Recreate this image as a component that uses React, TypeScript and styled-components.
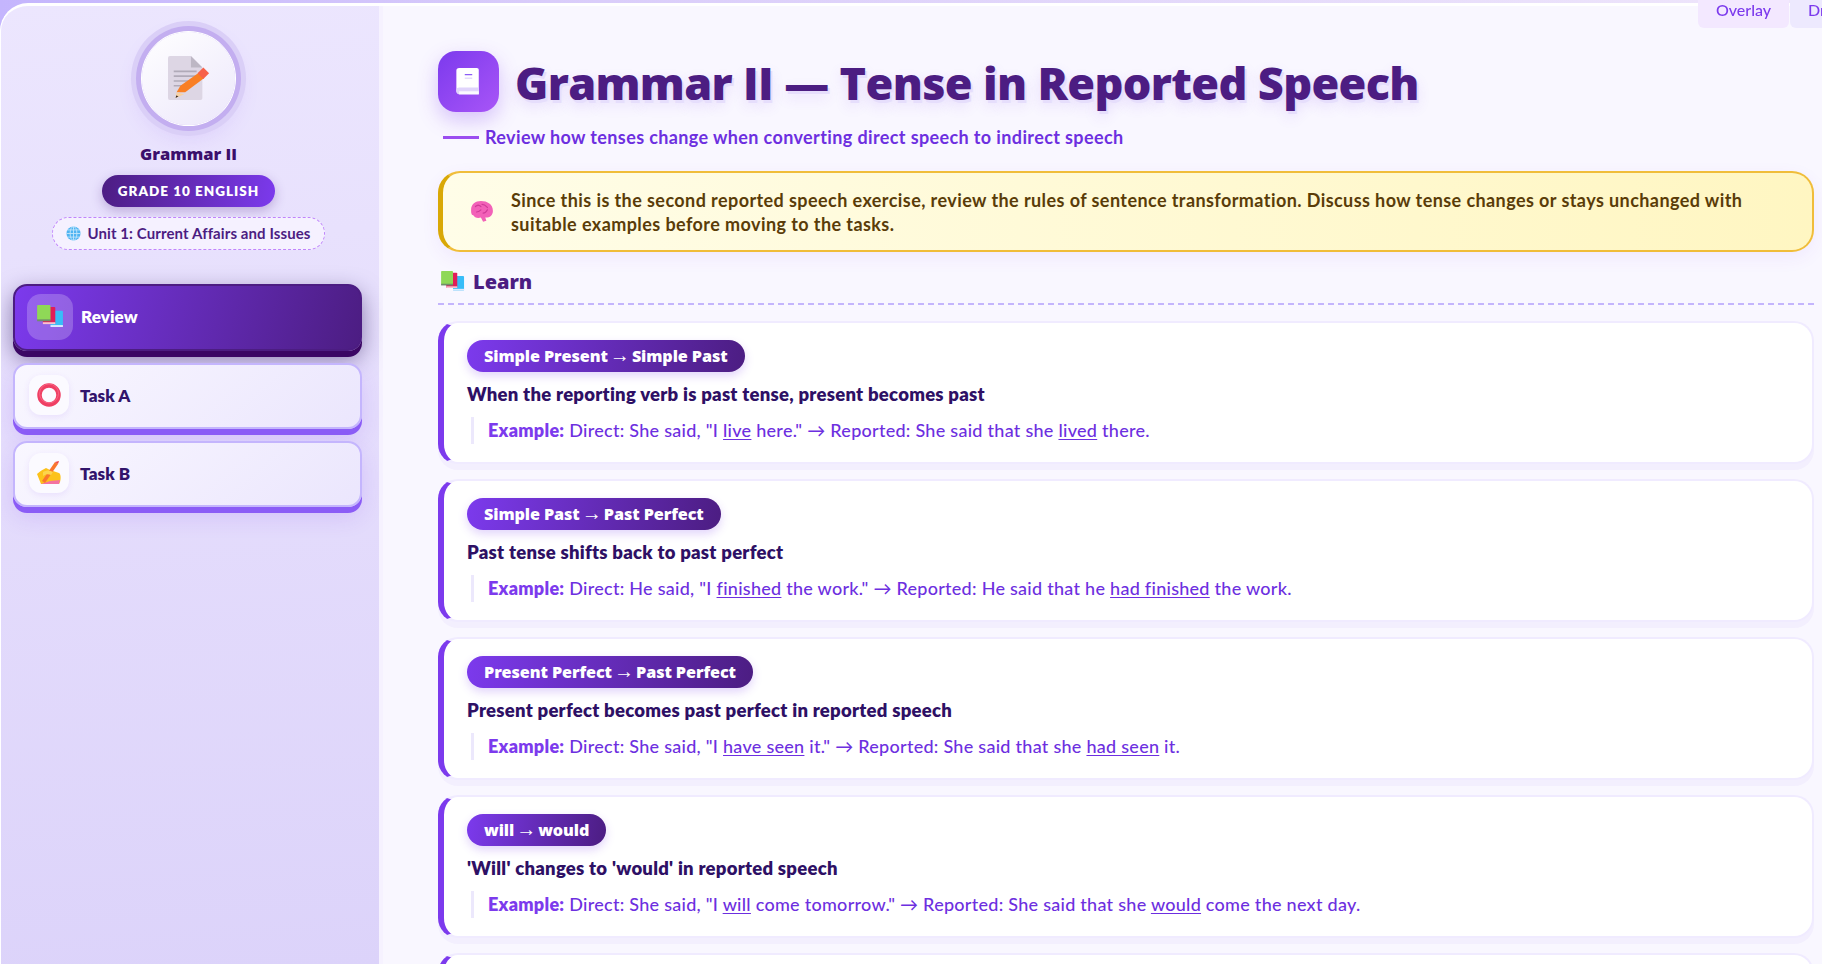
import React from "react";
import styled, { createGlobalStyle } from "styled-components";

const Global = createGlobalStyle`
  html, body { margin: 0; padding: 0; height: 100%; overflow: hidden; }
  body { background: linear-gradient(90deg, #c4b5fd 0%, #d9ccfa 30%, #efe6fb 100%); font-family: "Lato", "Noto Sans", sans-serif; }
  #root { height: 100vh; }
`;
const BODY = `"Lato", "Noto Sans", sans-serif`;
const HEAD = `"Open Sans", "Noto Sans", sans-serif`;

const Shell = styled.div`
  height: calc(100vh - 3px);
  margin-top: 3px;
  display: flex;
  border-top: 3px solid #fff;
  border-left: 1px solid #fff;
  border-radius: 28px 0 0 0;
  overflow: hidden;
  background: #f9f7ff;
`;
const Sidebar = styled.aside`
  flex: 0 0 382px;
  box-sizing: border-box;
  border-right: 4px solid #f6f2ff;
  padding: 25px 15px 0 12px;
  background: linear-gradient(176deg, #ece6fe 0%, #e4dcfc 50%, #dcd3fa 100%);
  display: flex;
  flex-direction: column;
`;
const Avatar = styled.div`
  width: 93px;
  height: 93px;
  align-self: center;
  margin-top: 1px;
  border-radius: 50%;
  background: linear-gradient(145deg, #ffffff, #ece7fb);
  box-shadow: 0 0 0 1px #fff, 0 0 0 6px #c3aef0, 0 0 0 11px #dacff7, 0 8px 24px rgba(124, 58, 237, 0.18);
  display: flex;
  align-items: center;
  justify-content: center;
`;
const SideTitle = styled.div`
  margin-top: 17px;
  text-align: center;
  font: 800 16.5px/24px ${HEAD};
  color: #3b0f6b;
`;
const GradeBadge = styled.div`
  align-self: center;
  margin-top: 9px;
  width: 173px;
  height: 32px;
  border-radius: 16px;
  background: linear-gradient(100deg, #4c1d82, #7c3aed);
  box-shadow: 0 4px 12px rgba(76, 29, 130, 0.28);
  color: #fff;
  font: 800 13.5px/32px ${BODY};
  letter-spacing: 1px;
  text-align: center;
`;
const UnitPill = styled.div`
  align-self: center;
  margin-top: 10px;
  width: 273px;
  height: 33px;
  box-sizing: border-box;
  border: 1px dashed #c084fc;
  border-radius: 17px;
  background: #f5f1ff;
  display: flex;
  align-items: center;
  justify-content: center;
  gap: 6px;
  font: 700 15px/1 ${BODY};
  letter-spacing: 0.1px;
  color: #4c1d82;
`;
const Nav = styled.nav`
  margin-top: 34px;
  display: flex;
  flex-direction: column;
  gap: 6px;
`;
const NavItem = styled.div<{ $active?: boolean }>`
  height: ${(p) => (p.$active ? "67px" : "66px")};
  width: 349px;
  box-sizing: border-box;
  border-radius: 14px;
  display: flex;
  align-items: center;
  gap: ${(p) => (p.$active ? "8px" : "11px")};
  padding: 0 0 2px ${(p) => (p.$active ? "12px" : "14px")};
  font: 800 17px/1 ${BODY};
  letter-spacing: 0.1px;
  margin-bottom: 6px;
  color: ${(p) => (p.$active ? "#fff" : "#32146b")};
  border: 2px solid ${(p) => (p.$active ? "#4c1d82" : "#c4b5fd")};
  background: ${(p) =>
    p.$active
      ? "linear-gradient(105deg, #7c3aed 0%, #4c1d82 100%)"
      : "linear-gradient(140deg, #f9f7ff 0%, #ebe6fd 100%)"};
  box-shadow: ${(p) =>
    p.$active
      ? "0 6px 0 #3b0764, 0 8px 22px rgba(40, 20, 90, 0.5)"
      : "0 6px 0 #8b5cf6, 0 10px 22px rgba(124, 58, 237, 0.16)"};
`;
const NavIcon = styled.div<{ $active?: boolean }>`
  width: ${(p) => (p.$active ? "46px" : "40px")};
  height: ${(p) => (p.$active ? "46px" : "40px")};
  border-radius: ${(p) => (p.$active ? "14px" : "12px")};
  background: ${(p) => (p.$active ? "rgba(255,255,255,.22)" : "#fbfaff")};
  box-shadow: ${(p) => (p.$active ? "none" : "0 2px 6px rgba(124,58,237,.1)")};
  display: flex;
  align-items: center;
  justify-content: center;
`;
const Main = styled.main`
  flex: 1;
  min-width: 0;
  box-sizing: border-box;
  padding: 45px 8px 0 55px;
  background: #f9f7ff;
  overflow: hidden;
`;
const TitleRow = styled.div`
  display: flex;
  align-items: center;
  gap: 16px;
`;
const TitleIcon = styled.div`
  width: 61px;
  height: 61px;
  border-radius: 18px;
  background: linear-gradient(135deg, #7c3aed, #a855f7);
  box-shadow: 0 8px 20px rgba(124, 58, 237, 0.28);
  display: flex;
  align-items: center;
  justify-content: center;
`;
const Title = styled.h1`
  margin: 1px 0 -1px;
  font: 800 45px/61px ${HEAD};
  letter-spacing: -0.65px;
  color: #4c1d82;
  text-shadow: 2px 3px 0 #e6defc, 0 6px 14px rgba(124, 58, 237, 0.15);
`;
const Subtitle = styled.div`
  margin-top: 13px;
  padding-left: 5px;
  display: flex;
  align-items: center;
  gap: 6px;
  font: 700 18px/24px ${BODY};
  letter-spacing: 0.38px;
  color: #6d2fe0;
`;
const Dash = styled.span`
  width: 36px;
  height: 3px;
  background: #9b4df0;
`;
const Alert = styled.div`
  margin-top: 22px;
  height: 81px;
  box-sizing: border-box;
  border: 2px solid #f0bd3a;
  border-left: 5px solid #d9a806;
  border-radius: 22px;
  background: linear-gradient(90deg, #fffde8, #fff6c2);
  box-shadow: 0 6px 18px rgba(124, 58, 237, 0.07);
  display: flex;
  align-items: center;
  gap: 16px;
  padding: 0 40px 0 26px;
  font: 700 18px/24px ${BODY};
  letter-spacing: 0.42px;
  color: #5a3c08;
  svg { flex: none; }
`;
const SectionHead = styled.div`
  margin-top: 14px;
  height: 39px;
  box-sizing: border-box;
  padding: 0 0 6px 3px;
  display: flex;
  align-items: center;
  gap: 8px;
  font: 800 20px/28px ${HEAD};
  color: #4c1d82;
  border-bottom: 2px dashed #c4b5fd;
`;
const CardList = styled.div`
  margin-top: 16px;
  display: flex;
  flex-direction: column;
  gap: 15px;
`;
const Card = styled.article`
  height: 143px;
  box-sizing: border-box;
  border: 2px solid #f0ebff;
  border-left: 6px solid #7c3aed;
  border-radius: 20px;
  background: #fff;
  box-shadow: 0 6px 0 #f3effe;
  padding: 17px 22px 0 23px;
`;
const Pill = styled.span`
  display: inline-block;
  height: 32px;
  padding: 0 17px;
  border-radius: 16px;
  background: linear-gradient(100deg, #7c3aed, #4c1d82);
  box-shadow: 0 4px 10px rgba(124, 58, 237, 0.22);
  color: #fff;
  font: 800 16.2px/31px ${HEAD};
  letter-spacing: -0.1px;
`;
const PillArrow = styled.span`
  font: 400 20px/31px "Liberation Sans", sans-serif;
  margin: 0 -2px;
`;
const Rule = styled.div`
  margin-top: 8px;
  font: 800 18.5px/28px ${BODY};
  letter-spacing: 0.25px;
  color: #2e1065;
`;
const Example = styled.div`
  margin-top: 9px;
  margin-left: 4px;
  height: 27px;
  border-left: 3px solid #ece8fc;
  padding-left: 14px;
  font: 500 18px/27px ${BODY};
  letter-spacing: 0.27px;
  color: #6d2fe0;
  b { font-weight: 800; color: #7c3aed; }
  u { text-underline-offset: 2px; }
`;
const TabBar = styled.div`
  position: fixed;
  top: 0;
  left: 1698px;
  display: flex;
  gap: 1px;
`;
const Tab = styled.div<{ $alt?: boolean }>`
  height: 28px;
  width: ${(p) => (p.$alt ? "60px" : "91px")};
  box-sizing: border-box;
  padding-left: ${(p) => (p.$alt ? "18px" : "0")};
  border-radius: 0 0 6px 6px;
  background: ${(p) => (p.$alt ? "#ede9fe" : "#f3e8ff")};
  color: #7c3aed;
  text-align: ${(p) => (p.$alt ? "left" : "center")};
  font: 500 16px/20px ${BODY};
`;

const Memo = () => (
  <svg width="42" height="46" viewBox="0 0 44 48">
    <path d="M2 0h22l12 12v32a2 2 0 0 1-2 2H2a2 2 0 0 1-2-2V2a2 2 0 0 1 2-2z" fill="#ddd6e4" />
    <path d="M24 0l12 12H24z" fill="#bdb7c4" />
    <g stroke="#b0aab8" strokeWidth="1.6">
      <path d="M6 16h24M6 21h24M6 26h20M6 31h14" />
    </g>
    <path d="M9 38l4-7 20-14 5 6-20 15z" fill="#f97f24" />
    <path d="M31 18l6-6 6 6-6 6z" fill="#f7614a" />
    <path d="M8 44l1-6 8 2z" fill="#f6d2a6" />
    <path d="M8 44l.6-2.6 2.4.8z" fill="#3a2a20" />
  </svg>
);
const Books = ({ size = 27 }: { size?: number }) => (
  <svg width={size} height={size * 0.85} viewBox="0 0 28 24">
    <rect x="14" y="6" width="13" height="17" rx="1" fill="#38bdf8" />
    <rect x="14" y="21" width="13" height="2" fill="#dbeafe" />
    <rect x="6" y="2" width="13" height="18" rx="1" fill="#e11d58" />
    <rect x="6" y="18" width="13" height="2" fill="#f9c2d0" />
    <rect x="0" y="0" width="14" height="16" rx="1" fill="#8fd857" />
    <rect x="0" y="15" width="14" height="2" fill="#6f8f6a" />
  </svg>
);
const Ring = () => (
  <svg width="24" height="24" viewBox="0 0 24 24">
    <circle cx="12" cy="12" r="9.5" fill="none" stroke="#ef3f63" strokeWidth="4.5" />
    <circle cx="12" cy="10.5" r="9.5" fill="none" stroke="#fb7190" strokeWidth="1" opacity=".7" />
  </svg>
);
const Hand = () => (
  <svg width="26" height="26" viewBox="0 0 26 26">
    <path d="M1 14c3-3 7-5 9-6l4 2 9 3c2 1 2 6 1 9l-1 2H5z" fill="#fcc21b" />
    <path d="M5 24h18l1-4-10 1z" fill="#f472a0" />
    <path d="M6 21L19 2l3 2L9 23z" fill="#f9762c" />
    <path d="M19 2l3 2 1-3z" fill="#ef4444" />
    <path d="M7 12c4-2 7-2 10 0l-2 3c-3-1-5-1-8 1z" fill="#fdd44c" />
  </svg>
);
const Globe = () => (
  <svg width="15" height="15" viewBox="0 0 16 16">
    <circle cx="8" cy="8" r="7.5" fill="#4fb4f2" />
    <g fill="none" stroke="#c9e8fb" strokeWidth=".9">
      <ellipse cx="8" cy="8" rx="3.6" ry="7.5" />
      <path d="M8 .5v15M.5 8h15M1.5 4.2h13M1.5 11.8h13" />
    </g>
  </svg>
);
const Brain = () => (
  <svg width="26" height="24" viewBox="1 1 22 22">
    <path d="M2 10c0-5 4-8 9-8 6 0 11 3 11 9 0 4-3 6-6 6h-1l1 3-3 1-2-4c-3 1-6 0-7-2-2 0-2-3-2-5z" fill="#f261b8" />
    <path d="M6 7c2-2 4-1 5 0M12 5c3 0 4 2 5 3M7 12c2 0 3-1 4-2M13 13c2 0 3-1 4-3" fill="none" stroke="#d03b98" strokeWidth="1.1" strokeLinecap="round" />
  </svg>
);
const BookWhite = () => (
  <svg width="25" height="28" viewBox="0 0 26 30">
    <path d="M3 0h19a2 2 0 0 1 2 2v26H5a4 4 0 0 1-5-3V3a3 3 0 0 1 3-3z" fill="#fff" />
    <path d="M0 23.5a3 3 0 0 1 3-2.5h21v7H3a3 3 0 0 1-3-3z" fill="#e0d4fb" />
    <path d="M3 25h21v3H3z" fill="#fff" opacity=".85" />
    <path d="M9 7h8" stroke="#8b5cf6" strokeWidth="1.4" />
    <path d="M9 11h8" stroke="#e5dcfb" strokeWidth="1.4" />
  </svg>
);

const rules = [
  {
    from: "Simple Present", to: "Simple Past",
    rule: "When the reporting verb is past tense, present becomes past",
    ex: <>Direct: She said, "I <u>live</u> here." → Reported: She said that she <u>lived</u> there.</>,
  },
  {
    from: "Simple Past", to: "Past Perfect",
    rule: "Past tense shifts back to past perfect",
    ex: <>Direct: He said, "I <u>finished</u> the work." → Reported: He said that he <u>had finished</u> the work.</>,
  },
  {
    from: "Present Perfect", to: "Past Perfect",
    rule: "Present perfect becomes past perfect in reported speech",
    ex: <>Direct: She said, "I <u>have seen</u> it." → Reported: She said that she <u>had seen</u> it.</>,
  },
  {
    from: "will", to: "would",
    rule: "'Will' changes to 'would' in reported speech",
    ex: <>Direct: She said, "I <u>will</u> come tomorrow." → Reported: She said that she <u>would</u> come the next day.</>,
  },
];

export default function App() {
  return (
    <>
      <Global />
      <Shell>
        <Sidebar>
          <Avatar><Memo /></Avatar>
          <SideTitle>Grammar II</SideTitle>
          <GradeBadge>GRADE 10 ENGLISH</GradeBadge>
          <UnitPill><Globe />Unit 1: Current Affairs and Issues</UnitPill>
          <Nav>
            <NavItem $active><NavIcon $active><Books /></NavIcon>Review</NavItem>
            <NavItem><NavIcon><Ring /></NavIcon>Task A</NavItem>
            <NavItem><NavIcon><Hand /></NavIcon>Task B</NavItem>
          </Nav>
        </Sidebar>
        <Main>
          <TitleRow>
            <TitleIcon><BookWhite /></TitleIcon>
            <Title>Grammar II — Tense in Reported Speech</Title>
          </TitleRow>
          <Subtitle><Dash />Review how tenses change when converting direct speech to indirect speech</Subtitle>
          <Alert>
            <Brain />
            <span>Since this is the second reported speech exercise, review the rules of sentence transformation. Discuss how tense changes or stays unchanged with suitable examples before moving to the tasks.</span>
          </Alert>
          <SectionHead><Books size={24} />Learn</SectionHead>
          <CardList>
            {rules.map((r) => (
              <Card key={r.from}>
                <Pill>{r.from} <PillArrow>→</PillArrow> {r.to}</Pill>
                <Rule>{r.rule}</Rule>
                <Example><b>Example:</b> {r.ex}</Example>
              </Card>
            ))}
            <Card />
          </CardList>
        </Main>
      </Shell>
      <TabBar>
        <Tab>Overlay</Tab>
        <Tab $alt>Draw</Tab>
      </TabBar>
    </>
  );
}
